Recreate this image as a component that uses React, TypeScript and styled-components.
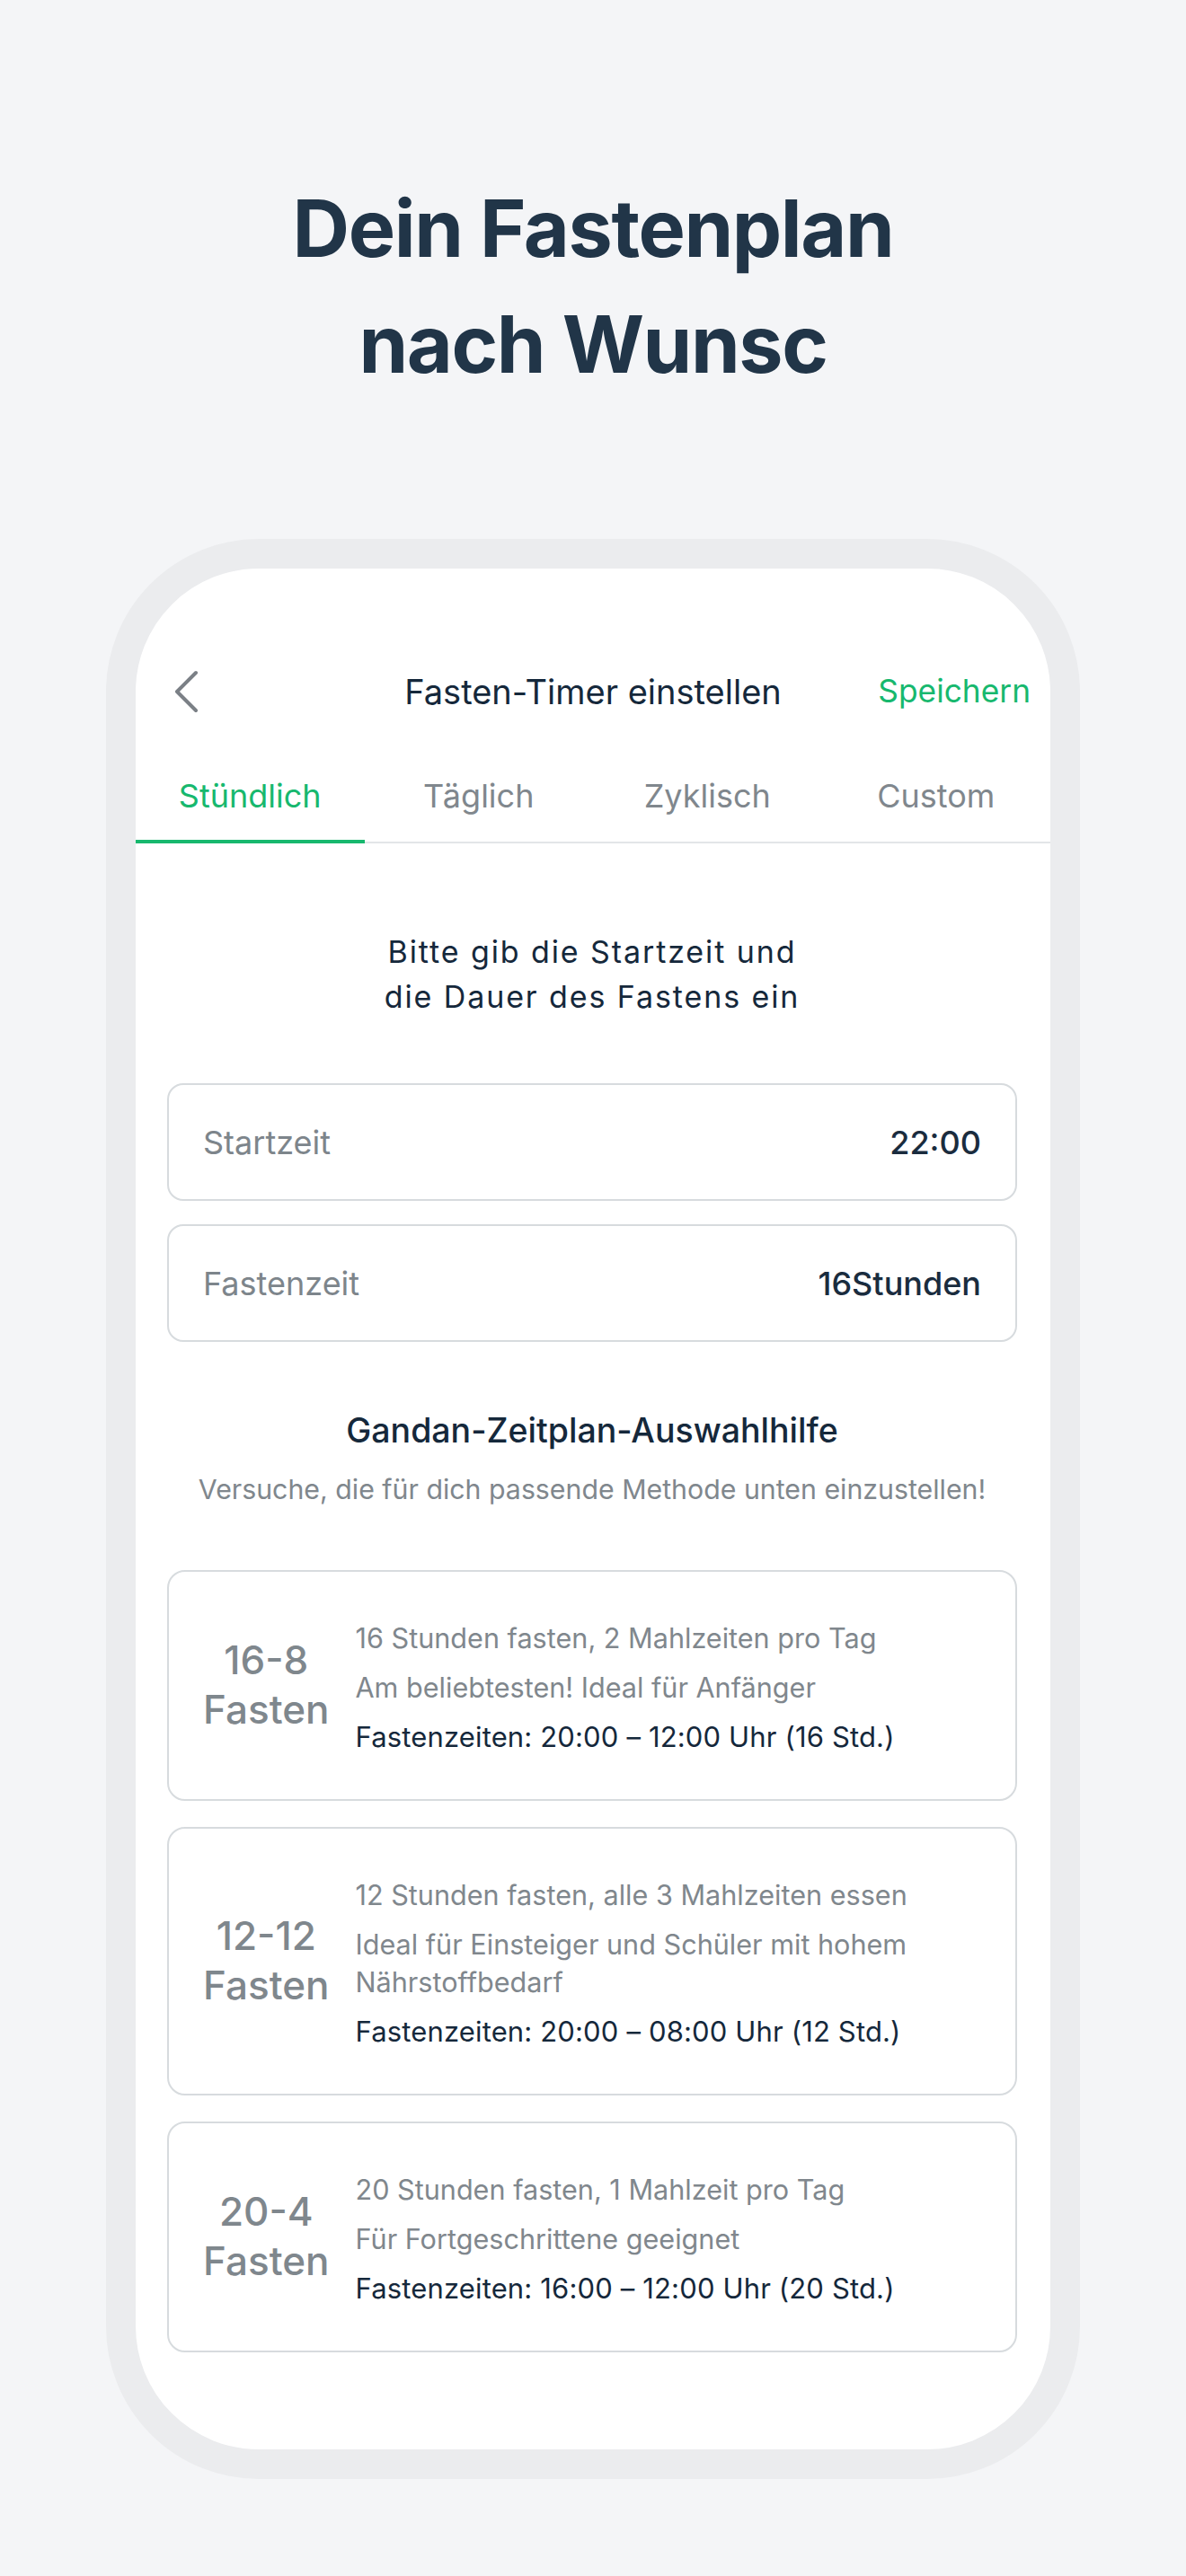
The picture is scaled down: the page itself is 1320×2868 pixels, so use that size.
import React from "react";
import styled, { createGlobalStyle } from "styled-components";

const GlobalStyle = createGlobalStyle`
  html, body {
    margin: 0;
    padding: 0;
    background: #f4f5f7;
  }
  body {
    font-family: Inter, "Noto Sans", "Liberation Sans", sans-serif;
    -webkit-font-smoothing: antialiased;
  }
  * { box-sizing: border-box; }
`;

const Page = styled.div`
  width: 1320px;
  min-height: 2868px;
  display: flex;
  flex-direction: column;
  align-items: center;
  background: #f4f5f7;
`;

const Heading = styled.h1`
  margin: 0;
  padding-top: 190px;
  font-size: 88px;
  line-height: 129px;
  font-weight: 700;
  letter-spacing: -1.4px;
  color: #213548;
  text-align: center;
`;

const Phone = styled.div`
  margin-top: 152px;
  width: 1084px;
  height: 2160px;
  border: 33px solid #ebecee;
  border-radius: 170px;
  background: #ffffff;
  overflow: hidden;
  display: flex;
  flex-direction: column;
`;

const NavBar = styled.div`
  margin-top: 100px;
  height: 74px;
  display: grid;
  grid-template-columns: 1fr auto 1fr;
  align-items: center;
`;

const BackButton = styled.div`
  justify-self: start;
  padding-left: 43px;
  display: flex;
  align-items: center;
`;

const NavTitle = styled.div`
  font-size: 38px;
  line-height: 44px;
  color: #15283b;
  font-weight: 400;
`;

const SaveButton = styled.div`
  justify-self: end;
  padding-right: 22px;
  font-size: 35.3px;
  line-height: 44px;
  color: #17b86e;
`;

const Tabs = styled.div`
  display: grid;
  grid-template-columns: repeat(4, 1fr);
  border-bottom: 2px solid #e3e5e8;
`;

const Tab = styled.div<{ $active?: boolean }>`
  padding: 57px 0 27px;
  font-size: 36px;
  line-height: 44px;
  text-align: center;
  color: ${(p) => (p.$active ? "#17b86e" : "#80878d")};
  border-bottom: 4px solid ${(p) => (p.$active ? "#17b86e" : "transparent")};
  margin-bottom: -2px;
`;

const Content = styled.div`
  padding: 0 37px 0 35px;
  display: flex;
  flex-direction: column;
`;

const Intro = styled.p`
  margin: 96px 0 0;
  font-size: 34px;
  line-height: 50px;
  letter-spacing: 1.9px;
  color: #15283b;
  text-align: center;
`;

const Fields = styled.div`
  margin-top: 71px;
  display: flex;
  flex-direction: column;
  gap: 26px;
`;

const Field = styled.div`
  height: 131px;
  border: 2px solid #d7dbde;
  border-radius: 18px;
  padding: 0 38px;
  display: flex;
  align-items: center;
  justify-content: space-between;
`;

const FieldLabel = styled.span`
  font-size: 36px;
  color: #7d858b;
`;

const FieldValue = styled.span`
  font-size: 36px;
  font-weight: 500;
  color: #1a2c3e;
`;

const SectionTitle = styled.h2`
  margin: 74px 0 0;
  font-size: 37.5px;
  line-height: 50px;
  font-weight: 500;
  color: #15283b;
  text-align: center;
`;

const SectionHint = styled.p`
  margin: 19px 0 0;
  font-size: 30.3px;
  line-height: 42px;
  color: #80878d;
  text-align: center;
`;

const Plans = styled.div`
  margin-top: 69px;
  display: flex;
  flex-direction: column;
  gap: 29px;
`;

const PlanCard = styled.div`
  border: 2px solid #d7dbde;
  border-radius: 20px;
  padding: 47px 36px 48px 38px;
  display: flex;
  align-items: center;
  gap: 29px;
`;

const PlanName = styled.div`
  flex: 0 0 140px;
  text-align: center;
  font-size: 44px;
  line-height: 55px;
  font-weight: 500;
  color: #7f878d;
`;

const PlanInfo = styled.div`
  flex: 1;
  padding-top: 6px;
  display: flex;
  flex-direction: column;
  gap: 13px;
`;

const PlanLine = styled.div<{ $strong?: boolean }>`
  font-size: ${(p) => (p.$strong ? "31px" : "30.6px")};
  line-height: 42px;
  letter-spacing: ${(p) => (p.$strong ? "0.15px" : "0")};
  color: ${(p) => (p.$strong ? "#15283b" : "#80878d")};
`;

const ChevronLeft = () => (
  <svg width="28" height="48" viewBox="0 0 28 48" fill="none">
    <polyline
      points="24,3 3,24 24,45"
      stroke="#7b8086"
      strokeWidth="4"
      strokeLinecap="round"
      strokeLinejoin="round"
    />
  </svg>
);

const tabs = ["Stündlich", "Täglich", "Zyklisch", "Custom"];

const plans = [
  {
    top: "16-8",
    lines: [
      "16 Stunden fasten, 2 Mahlzeiten pro Tag",
      "Am beliebtesten! Ideal für Anfänger",
    ],
    times: "Fastenzeiten: 20:00 – 12:00 Uhr (16 Std.)",
  },
  {
    top: "12-12",
    lines: [
      "12 Stunden fasten, alle 3 Mahlzeiten essen",
      "Ideal für Einsteiger und Schüler mit hohem Nährstoffbedarf",
    ],
    times: "Fastenzeiten: 20:00 – 08:00 Uhr (12 Std.)",
  },
  {
    top: "20-4",
    lines: [
      "20 Stunden fasten, 1 Mahlzeit pro Tag",
      "Für Fortgeschrittene geeignet",
    ],
    times: "Fastenzeiten: 16:00 – 12:00 Uhr (20 Std.)",
  },
];

export default function App() {
  return (
    <>
      <GlobalStyle />
      <Page>
        <Heading>
          Dein Fastenplan
          <br />
          nach Wunsc
        </Heading>
        <Phone>
          <NavBar>
            <BackButton>
              <ChevronLeft />
            </BackButton>
            <NavTitle>Fasten-Timer einstellen</NavTitle>
            <SaveButton>Speichern</SaveButton>
          </NavBar>
          <Tabs>
            {tabs.map((t, i) => (
              <Tab key={t} $active={i === 0}>
                {t}
              </Tab>
            ))}
          </Tabs>
          <Content>
            <Intro>
              Bitte gib die Startzeit und
              <br />
              die Dauer des Fastens ein
            </Intro>
            <Fields>
              <Field>
                <FieldLabel>Startzeit</FieldLabel>
                <FieldValue>22:00</FieldValue>
              </Field>
              <Field>
                <FieldLabel>Fastenzeit</FieldLabel>
                <FieldValue>16Stunden</FieldValue>
              </Field>
            </Fields>
            <SectionTitle>Gandan-Zeitplan-Auswahlhilfe</SectionTitle>
            <SectionHint>
              Versuche, die für dich passende Methode unten einzustellen!
            </SectionHint>
            <Plans>
              {plans.map((p) => (
                <PlanCard key={p.top}>
                  <PlanName>
                    {p.top}
                    <br />
                    Fasten
                  </PlanName>
                  <PlanInfo>
                    {p.lines.map((l) => (
                      <PlanLine key={l}>{l}</PlanLine>
                    ))}
                    <PlanLine $strong>{p.times}</PlanLine>
                  </PlanInfo>
                </PlanCard>
              ))}
            </Plans>
          </Content>
        </Phone>
      </Page>
    </>
  );
}
